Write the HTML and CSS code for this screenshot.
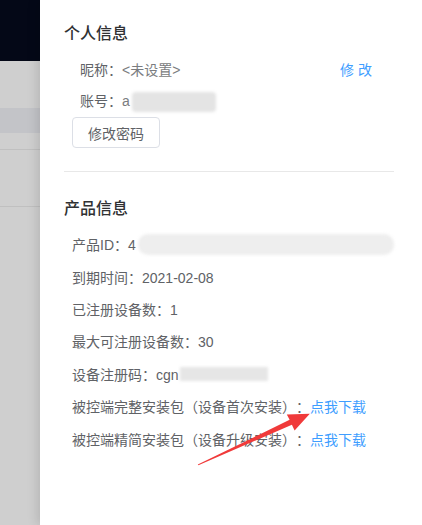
FILE: index.html
```html
<!DOCTYPE html>
<html lang="zh-CN">
<head>
    <meta charset="UTF-8">
    <meta name="viewport" content="width=device-width, initial-scale=1.0">
    <title>个人信息</title>
    <link rel="stylesheet" href="styles.css">
</head>
<body>
    <div class="page">
        <div class="backdrop">
            <div class="topbar"></div>
            <div class="menu-space"></div>
            <div class="menu-active"></div>
            <div class="menu-row short"></div>
            <div class="menu-row"></div>
        </div>

        <div class="drawer">
            <h3 class="section-title">个人信息</h3>
            <div class="user-info">
                <div class="info-row">
                    <span>昵称：<span class="value">&lt;未设置&gt;</span></span>
                    <a class="link edit" href="#">修 改</a>
                </div>
                <div class="info-row">
                    <span>账号：<span class="value">a</span><span class="masked masked-account"></span></span>
                </div>
                <button class="btn">修改密码</button>
            </div>

            <div class="divider"></div>

            <h3 class="section-title">产品信息</h3>
            <div class="product-info">
                <div class="info-row">产品ID：4<span class="masked masked-id"></span></div>
                <div class="info-row">到期时间：2021-02-08</div>
                <div class="info-row">已注册设备数：1</div>
                <div class="info-row">最大可注册设备数：30</div>
                <div class="info-row">设备注册码：cgn<span class="masked masked-code"></span></div>
                <div class="info-row">被控端完整安装包（设备首次安装）：<a class="link" href="#">点我下载</a></div>
                <div class="info-row">被控端精简安装包（设备升级安装）：<a class="link" href="#">点我下载</a></div>
            </div>
        </div>
    </div>

    <!-- annotation arrow -->
    <svg class="arrow" width="422" height="525" viewBox="0 0 422 525">
        <polygon points="197.8,464.5 289.6,419.8 286.8,414.6 309.8,413.8 294.6,430.4 291.9,424.8 198.4,465.2" fill="#f03a3a"/>
    </svg>
</body>
</html>
```

FILE: styles.css
```css
body {
    margin: 0;
    font-family: "Helvetica Neue", Helvetica, "Liberation Sans", "Noto Sans CJK SC", sans-serif;
    font-size: 14px;
    color: #606266;
    background: #cfcfcf;
    text-spacing-trim: space-all;
}
.page {
    display: flex;
    width: 422px;
    height: 525px;
    overflow: hidden;
}
.backdrop {
    width: 40px;
    flex-shrink: 0;
    background: #cfcfcf;
}
.topbar {
    height: 61px;
    background: #040817;
}
.menu-space {
    height: 47px;
}
.menu-active {
    height: 25px;
    background: #c3c4c8;
}
.menu-row {
    height: 56px;
    border-bottom: 1px solid #c0c0c0;
}
.menu-row.short {
    height: 16px;
}
.drawer {
    flex: 1;
    background: #fff;
    padding: 22px 28px 0 24px;
    box-shadow: -3px 0 10px rgba(0, 0, 0, 0.12);
    position: relative;
}
.section-title {
    margin: 0;
    font-size: 16px;
    line-height: 24px;
    font-weight: 500;
    color: #303133;
}
.user-info {
    margin-top: 7px;
}
.user-info .info-row {
    padding: 0 22px 0 16px;
}
.info-row {
    display: flex;
    justify-content: space-between;
    align-items: center;
    height: 32px;
    white-space: nowrap;
}
.product-info {
    margin-top: 7px;
}
.product-info .info-row {
    justify-content: flex-start;
    padding-left: 8px;
    height: 32.4px;
}
.value {
    color: #7a7c80;
}
.link {
    color: #409eff;
    text-decoration: none;
}
.btn {
    margin-left: 8px;
    height: 31px;
    padding: 0 15px;
    font-family: inherit;
    font-size: 14px;
    color: #606266;
    background: #fff;
    border: 1px solid #dcdfe6;
    border-radius: 4px;
}
.divider {
    height: 1px;
    background: #e8e8e8;
    margin: 23px 0 25px;
}
.masked {
    display: inline-block;
    vertical-align: middle;
    filter: blur(1.5px);
}
.masked-account {
    width: 84px;
    height: 20px;
    margin-left: 2px;
    border-radius: 4px;
    background: #e4e4e4;
}
.masked-id {
    width: 256px;
    height: 21px;
    margin-left: 2px;
    border-radius: 10px;
    background: #eeeeee;
}
.masked-code {
    width: 88px;
    height: 14px;
    margin-left: 1px;
    background: #e6e6e6;
}
.arrow {
    position: absolute;
    left: 0;
    top: 0;
    pointer-events: none;
}
```
